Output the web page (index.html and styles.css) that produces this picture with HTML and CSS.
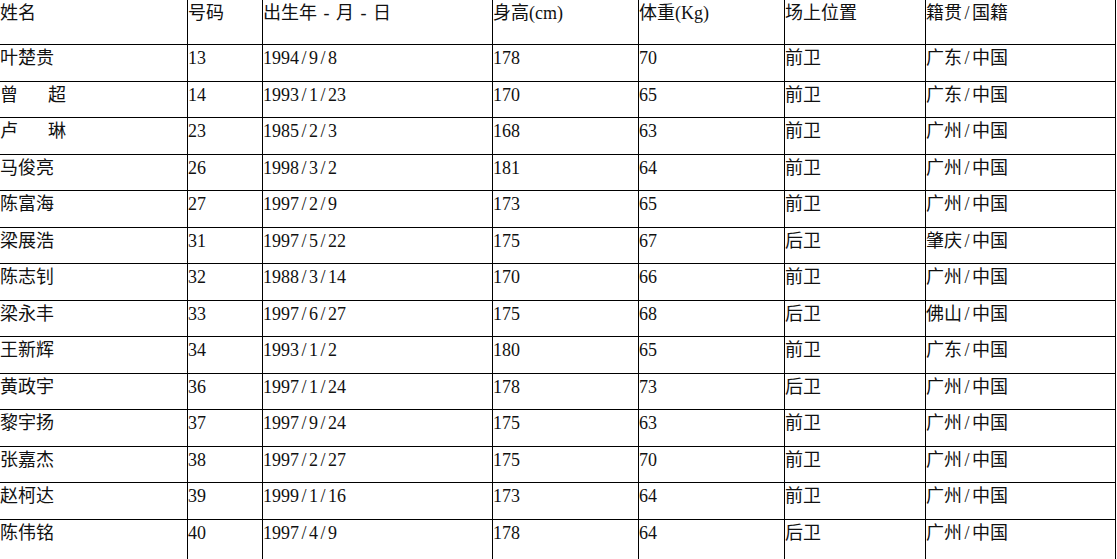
FILE: index.html
```html
<!DOCTYPE html>
<html lang="zh-CN">
<head>
<meta charset="utf-8">
<title>球员名单</title>
<link rel="stylesheet" href="styles.css">
</head>
<body>
<div class="sheet">
  <div class="cell head">姓名</div><div class="cell head">号码</div><div class="cell head">出生年<span class="dash">-</span>月<span class="dash">-</span>日</div><div class="cell head">身高(cm)</div><div class="cell head">体重(Kg)</div><div class="cell head">场上位置</div><div class="cell head">籍贯<span class="sl">/</span>国籍</div>
  <div class="cell">叶楚贵</div><div class="cell">13</div><div class="cell">1994<span class="sl">/</span>9<span class="sl">/</span>8</div><div class="cell">178</div><div class="cell">70</div><div class="cell">前卫</div><div class="cell">广东<span class="sl">/</span>中国</div>
  <div class="cell">曾<span class="sp"></span>超</div><div class="cell">14</div><div class="cell">1993<span class="sl">/</span>1<span class="sl">/</span>23</div><div class="cell">170</div><div class="cell">65</div><div class="cell">前卫</div><div class="cell">广东<span class="sl">/</span>中国</div>
  <div class="cell">卢<span class="sp"></span>琳</div><div class="cell">23</div><div class="cell">1985<span class="sl">/</span>2<span class="sl">/</span>3</div><div class="cell">168</div><div class="cell">63</div><div class="cell">前卫</div><div class="cell">广州<span class="sl">/</span>中国</div>
  <div class="cell">马俊亮</div><div class="cell">26</div><div class="cell">1998<span class="sl">/</span>3<span class="sl">/</span>2</div><div class="cell">181</div><div class="cell">64</div><div class="cell">前卫</div><div class="cell">广州<span class="sl">/</span>中国</div>
  <div class="cell">陈富海</div><div class="cell">27</div><div class="cell">1997<span class="sl">/</span>2<span class="sl">/</span>9</div><div class="cell">173</div><div class="cell">65</div><div class="cell">前卫</div><div class="cell">广州<span class="sl">/</span>中国</div>
  <div class="cell">梁展浩</div><div class="cell">31</div><div class="cell">1997<span class="sl">/</span>5<span class="sl">/</span>22</div><div class="cell">175</div><div class="cell">67</div><div class="cell">后卫</div><div class="cell">肇庆<span class="sl">/</span>中国</div>
  <div class="cell">陈志钊</div><div class="cell">32</div><div class="cell">1988<span class="sl">/</span>3<span class="sl">/</span>14</div><div class="cell">170</div><div class="cell">66</div><div class="cell">前卫</div><div class="cell">广州<span class="sl">/</span>中国</div>
  <div class="cell">梁永丰</div><div class="cell">33</div><div class="cell">1997<span class="sl">/</span>6<span class="sl">/</span>27</div><div class="cell">175</div><div class="cell">68</div><div class="cell">后卫</div><div class="cell">佛山<span class="sl">/</span>中国</div>
  <div class="cell">王新辉</div><div class="cell">34</div><div class="cell">1993<span class="sl">/</span>1<span class="sl">/</span>2</div><div class="cell">180</div><div class="cell">65</div><div class="cell">前卫</div><div class="cell">广东<span class="sl">/</span>中国</div>
  <div class="cell">黄政宇</div><div class="cell">36</div><div class="cell">1997<span class="sl">/</span>1<span class="sl">/</span>24</div><div class="cell">178</div><div class="cell">73</div><div class="cell">后卫</div><div class="cell">广州<span class="sl">/</span>中国</div>
  <div class="cell">黎宇扬</div><div class="cell">37</div><div class="cell">1997<span class="sl">/</span>9<span class="sl">/</span>24</div><div class="cell">175</div><div class="cell">63</div><div class="cell">前卫</div><div class="cell">广州<span class="sl">/</span>中国</div>
  <div class="cell">张嘉杰</div><div class="cell">38</div><div class="cell">1997<span class="sl">/</span>2<span class="sl">/</span>27</div><div class="cell">175</div><div class="cell">70</div><div class="cell">前卫</div><div class="cell">广州<span class="sl">/</span>中国</div>
  <div class="cell">赵柯达</div><div class="cell">39</div><div class="cell">1999<span class="sl">/</span>1<span class="sl">/</span>16</div><div class="cell">173</div><div class="cell">64</div><div class="cell">前卫</div><div class="cell">广州<span class="sl">/</span>中国</div>
  <div class="cell last">陈伟铭</div><div class="cell last">40</div><div class="cell last">1997<span class="sl">/</span>4<span class="sl">/</span>9</div><div class="cell last">178</div><div class="cell last">64</div><div class="cell last">后卫</div><div class="cell last">广州<span class="sl">/</span>中国</div>
</div>
</body>
</html>
```

FILE: styles.css
```css
html, body {
  margin: 0;
  padding: 0;
  background: #ffffff;
  overflow: hidden;
}

.sheet {
  display: grid;
  grid-template-columns: 188px 75px 230px 146px 146px 141px 190px;
  grid-template-rows: 45px repeat(13, 36.5px) 48px;
  width: 1116px;
  font-family: "Liberation Serif", "Noto Sans CJK SC", serif;
  font-size: 18px;
  line-height: 24px;
  color: #111111;
}

.cell {
  box-sizing: border-box;
  border-right: 1px solid #000000;
  border-bottom: 1px solid #000000;
  padding: 1px 0 0 0;
  white-space: nowrap;
  overflow: hidden;
}

.cell.last {
  border-bottom: none;
}

.sp {
  display: inline-block;
  width: 30px;
}

.sl {
  display: inline-block;
  width: 10px;
  text-align: center;
}

.dash {
  display: inline-block;
  width: 19px;
  text-align: center;
}
```
